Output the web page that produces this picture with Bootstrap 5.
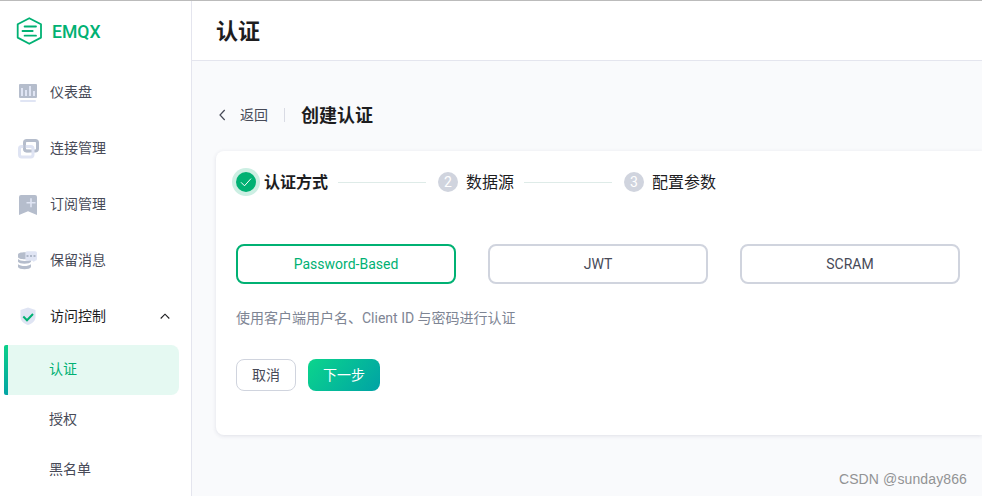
<!DOCTYPE html>
<html lang="zh-CN">
<head>
  <meta charset="UTF-8" />
  <meta name="viewport" content="width=device-width, initial-scale=1" />
  <title>EMQX - 创建认证</title>
  <link href="https://cdn.jsdelivr.net/npm/bootstrap@5.3.3/dist/css/bootstrap.min.css" rel="stylesheet" />
  <style>
    body {
      font-family: Roboto, "Noto Sans CJK SC", sans-serif;
      font-size: 14px;
      line-height: 20px;
      color: #474a57;
      background: #f9fafc;
    }
    .app { height: 496px; border-top: 1px solid #bbb; }

    /* sidebar */
    .sidebar { width: 192px; background: #fff; border-right: 1px solid #e4e5ee; }
    .logo { height: 63px; padding: 0 0 3px 16px; color: #00b173; font-size: 17.6px; font-weight: 500; }
    .logo span { margin-left: 9px; padding-top: 1px; }
    .menu-item { height: 56px; padding-left: 17px; padding-right: 20px; color: #474a57; text-decoration: none; }
    .menu-item span { margin-left: 11px; }
    .menu-item.opened { color: #1d1d1f; }
    .sub-menu { padding-top: 1px; }
    .sub-item { height: 50px; margin: 0 12px 0 4px; padding: 0 0 2px 45px; color: #474a57; text-decoration: none; }
    .sub-item.active {
      color: #00b173;
      background: linear-gradient(180deg, #0bd089, #03a4a4) left / 4px 100% no-repeat, #e5f9f2;
      border-radius: 2px 8px 8px 2px;
    }

    /* main area */
    .top-bar { height: 60px; padding: 2px 0 0 24px; background: #fff; border-bottom: 1px solid #e4e5ee; }
    .top-bar h1 { font-size: 22px; font-weight: 700; color: #1d1d1f; line-height: 30px; }
    .content { padding: 40px 0 0 24px; }
    .page-head { height: 28px; }
    .page-head a { padding-bottom: 1px; color: #474a57; text-decoration: none; }
    .split { width: 1px; height: 14px; margin: 0 16px; background: #d9dbe4; }
    .page-head h2 { padding-top: 1px; font-size: 18px; font-weight: 700; color: #1d1d1f; line-height: 28px; }
    .panel {
      height: 284px;
      margin-top: 22px;
      padding: 17px 0 0 20px;
      background: #fff;
      border-radius: 8px 0 0 8px;
      box-shadow: 0 1px 4px rgba(40, 45, 80, .12);
    }
    .steps { height: 28px; font-size: 16px; color: #1d1d1f; }
    .steps > span { padding-top: 2px; }
    .step-icon {
      width: 20px;
      height: 20px;
      margin-right: 8px;
      border-radius: 50%;
      background: #d0d4de;
      color: #fff;
      font-size: 14px;
      line-height: 20px;
      text-align: center;
    }
    .step-icon.current { background: #00b173; box-shadow: 0 0 0 4px #ccefe3; }
    .step-line { width: 88px; height: 1px; margin: 0 12px 0 10px; background: #deebe8; }
    .options { gap: 32px; margin-top: 48px; }
    .option {
      width: 220px;
      height: 40px;
      padding: 0;
      border: 2px solid #d0d4de;
      border-radius: 8px;
      background: #fff;
      color: #474a57;
      font-size: 14px;
    }
    .option.selected { border-color: #00b173; color: #00b173; }
    .tip { margin: 24px 0 0; color: #7e8594; }
    .actions { gap: 12px; margin-top: 31px; }
    .actions .btn { height: 32px; padding: 0; font-size: 14px; border-radius: 8px; }
    .btn-cancel { width: 60px; border: 1px solid #d0d4de; background: #fff; color: #474a57; }
    .btn-next { width: 72px; border: 0; background: linear-gradient(131deg, #0bd58c, #00a2a5); color: #fff; }
    .btn-next:hover { color: #fff; }
    .watermark {
      right: 15px;
      bottom: 7px;
      font-family: "Liberation Sans", sans-serif;
      font-size: 14px;
      letter-spacing: .12px;
      color: #929394;
    }
  </style>
</head>
<body>
  <div class="app d-flex overflow-hidden position-relative">
    <aside class="sidebar flex-shrink-0">
      <div class="logo d-flex align-items-center">
        <svg width="27" height="28" viewBox="0 0 27 28" fill="none" stroke="#00b173" stroke-width="1.8" stroke-linejoin="round" stroke-linecap="round">
          <path d="M13.3 1.2 25 7.2v13.4l-11.7 6.2L1.7 20.6V7.2Z" />
          <path d="M8.600 9.500H20M6.500 14h10.200M8.600 18.700H20" />
        </svg>
        <span>EMQX</span>
      </div>
      <nav>
        <a href="#" class="menu-item d-flex align-items-center">
          <svg width="22" height="22" viewBox="0 0 22 22">
            <rect x="2" y="3" width="18" height="14" rx="1" fill="#b5bdcc" />
            <path d="M5 7v8M9 9v6M13 5v10M17 10v5" stroke="#e0e5f4" stroke-width="2" />
            <path d="M4 20h14" stroke="#e0e5f4" stroke-width="2" stroke-linecap="round" />
          </svg>
          <span>仪表盘</span>
        </a>
        <a href="#" class="menu-item d-flex align-items-center">
          <svg width="22" height="22" viewBox="0 0 22 22" fill="none" stroke-width="3">
            <rect x="7.5" y="3.5" width="13" height="10.5" rx="2.2" stroke="#b5bdcc" />
            <rect x="2.5" y="9.5" width="13.5" height="10.5" rx="2.2" stroke="#dfe4f3" />
            <path d="M7.5 8v3.8q0 2.2 2.2 2.2h3" stroke="#b5bdcc" stroke-width="2.4" />
          </svg>
          <span>连接管理</span>
        </a>
        <a href="#" class="menu-item d-flex align-items-center">
          <svg width="22" height="22" viewBox="0 0 22 22">
            <path d="M2 4q0-2 2-2h14q2 0 2 2v18l-9-3.8L2 22Z" fill="#b5bdcc" />
            <path d="M14 5.3v9M9.5 9.8h9" stroke="#e0e5f4" stroke-width="1.6" />
          </svg>
          <span>订阅管理</span>
        </a>
        <a href="#" class="menu-item d-flex align-items-center">
          <svg width="22" height="22" viewBox="0 0 22 22">
            <path d="M1 5.5C1 2.5 14 2.5 14 5.5V8c0 3-13 3-13 0Z" fill="#b5bdcc" />
            <path d="M1 10c2 2.600 11 2.600 13 0v2.700c-1 2.600-12 2.600-13 0Z" fill="#b5bdcc" />
            <path d="M1 15.200c3 2.400 10 2.400 13 0V18c-1 2.900-12 2.900-13 0Z" fill="#b5bdcc" />
            <path d="M10 2.200h8.200q1.800 0 1.800 1.800v6q0 1.800-1.800 1.800H18L16.800 13l-1.200-1.200H10Q8.400 11.800 8.400 10V4q0-1.800 1.600-1.800Z" fill="#e0e5f4" />
            <path d="M9.500 6.100h2v1.900h-2zM13 6.100h2v1.900h-2zM16.500 6.100h2v1.900h-2z" fill="#aeb7c8" />
          </svg>
          <span>保留消息</span>
        </a>
        <a href="#" class="menu-item opened d-flex align-items-center">
          <svg width="22" height="22" viewBox="0 0 22 22">
            <path d="M11 2.500 18.500 5v7c0 4-3.500 6.800-7.500 8-4-1.200-7.500-4-7.500-8V5Z" fill="#dfe4f3" />
            <path d="m6.300 11.500 3.700 3.700 6-6.200" fill="none" stroke="#00b173" stroke-width="2" />
          </svg>
          <span>访问控制</span>
          <svg class="ms-auto" width="12" height="12" viewBox="0 0 12 12" fill="none" stroke="#1d1d1f" stroke-width="1.100">
            <path d="M1.700 8.500 6 4.200l4.300 4.300" />
          </svg>
        </a>
        <div class="sub-menu">
          <a href="#" class="sub-item active d-flex align-items-center">认证</a>
          <a href="#" class="sub-item d-flex align-items-center">授权</a>
          <a href="#" class="sub-item d-flex align-items-center">黑名单</a>
        </div>
      </nav>
    </aside>

    <main class="flex-grow-1">
      <header class="top-bar d-flex align-items-center">
        <h1 class="mb-0">认证</h1>
      </header>
      <div class="content">
        <div class="page-head d-flex align-items-center">
          <a href="#" class="d-flex align-items-center">
            <svg class="me-2" width="16" height="14" viewBox="0 0 16 14" fill="none" stroke="#474a57" stroke-width="1.200">
              <path d="M8.700 2 4 7l4.700 5" />
            </svg>
            返回
          </a>
          <div class="split"></div>
          <h2 class="mb-0">创建认证</h2>
        </div>
        <section class="panel">
          <div class="steps d-flex align-items-center">
            <div class="step-icon current d-flex align-items-center justify-content-center">
              <svg width="14" height="14" viewBox="0 0 14 14" fill="none" stroke="#fff" stroke-width="1">
                <path d="m2 7.300 3.500 3.500L12 3.600" />
              </svg>
            </div>
            <span class="fw-bold">认证方式</span>
            <div class="step-line"></div>
            <div class="step-icon">2</div>
            <span>数据源</span>
            <div class="step-line"></div>
            <div class="step-icon">3</div>
            <span>配置参数</span>
          </div>
          <div class="options d-flex">
            <button type="button" class="option selected">Password-Based</button>
            <button type="button" class="option">JWT</button>
            <button type="button" class="option">SCRAM</button>
          </div>
          <p class="tip">使用客户端用户名、Client ID 与密码进行认证</p>
          <div class="actions d-flex">
            <button type="button" class="btn btn-cancel">取消</button>
            <button type="button" class="btn btn-next">下一步</button>
          </div>
        </section>
      </div>
    </main>
    <div class="watermark position-absolute">CSDN @sunday866</div>
  </div>

  <script src="https://cdn.jsdelivr.net/npm/bootstrap@5.3.3/dist/js/bootstrap.bundle.min.js"></script>
</body>
</html>
